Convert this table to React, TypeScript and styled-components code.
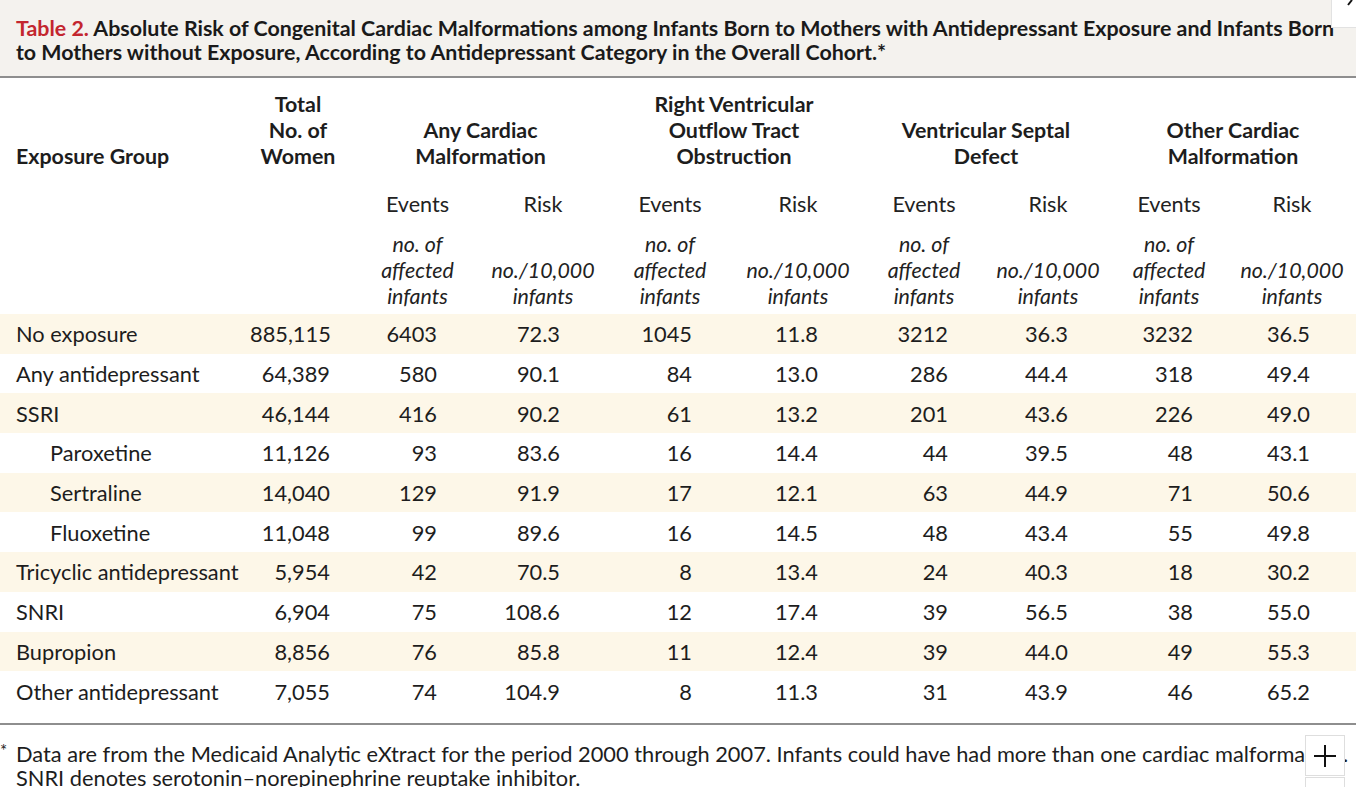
import React from "react";
import styled, { createGlobalStyle } from "styled-components";

const GlobalStyle = createGlobalStyle`
  html, body {
    margin: 0;
    padding: 0;
    background: #ffffff;
  }
  body {
    font-family: Lato, "Open Sans", sans-serif;
    color: #1d1d1d;
    overflow: hidden;
  }
`;

// column template shared by header and body rows
const COLS = "250px 105px 125px 126px 128px 128px 124px 124px 118px 128px";
// right padding of the numeric cells, one per data column
const PADS = [25, 43, 46, 42, 44, 38, 42, 35, 46];

type Row = { name: string; indent?: boolean; values: string[] };

const rows: Row[] = [
  { name: "No exposure", values: ["885,115", "6403", "72.3", "1045", "11.8", "3212", "36.3", "3232", "36.5"] },
  { name: "Any antidepressant", values: ["64,389", "580", "90.1", "84", "13.0", "286", "44.4", "318", "49.4"] },
  { name: "SSRI", values: ["46,144", "416", "90.2", "61", "13.2", "201", "43.6", "226", "49.0"] },
  { name: "Paroxetine", indent: true, values: ["11,126", "93", "83.6", "16", "14.4", "44", "39.5", "48", "43.1"] },
  { name: "Sertraline", indent: true, values: ["14,040", "129", "91.9", "17", "12.1", "63", "44.9", "71", "50.6"] },
  { name: "Fluoxetine", indent: true, values: ["11,048", "99", "89.6", "16", "14.5", "48", "43.4", "55", "49.8"] },
  { name: "Tricyclic antidepressant", values: ["5,954", "42", "70.5", "8", "13.4", "24", "40.3", "18", "30.2"] },
  { name: "SNRI", values: ["6,904", "75", "108.6", "12", "17.4", "39", "56.5", "38", "55.0"] },
  { name: "Bupropion", values: ["8,856", "76", "85.8", "11", "12.4", "39", "44.0", "49", "55.3"] },
  { name: "Other antidepressant", values: ["7,055", "74", "104.9", "8", "11.3", "31", "43.9", "46", "65.2"] },
];

const groups = [
  ["Any Cardiac", "Malformation"],
  ["Right Ventricular", "Outflow Tract", "Obstruction"],
  ["Ventricular Septal", "Defect"],
  ["Other Cardiac", "Malformation"],
];

const App = () => {
  return (
    <Page>
      <GlobalStyle />
      <Caption>
        <TitleLine>
          <Red>Table 2.</Red> Absolute Risk of Congenital Cardiac Malformations among Infants Born to
          Mothers with Antidepressant Exposure and Infants Born
        </TitleLine>
        <TitleLine>
          to Mothers without Exposure, According to Antidepressant Category in the Overall Cohort.*
        </TitleLine>
      </Caption>

      <Table>
        <HeadRow>
          <HeadCell $align="left">Exposure Group</HeadCell>
          <HeadCell $pr={9}>
            Total
            <br />
            No. of
            <br />
            Women
          </HeadCell>
          {groups.map((g, i) => (
            <HeadCell key={i} $span={2}>
              {g.map((l, j) => (
                <div key={j}>{l}</div>
              ))}
            </HeadCell>
          ))}
        </HeadRow>

        <SubRow>
          <span />
          <span />
          {groups.map((_, i) => (
            <React.Fragment key={i}>
              <SubCell>Events</SubCell>
              <SubCell>Risk</SubCell>
            </React.Fragment>
          ))}
        </SubRow>

        <UnitRow>
          <span />
          <span />
          {groups.map((_, i) => (
            <React.Fragment key={i}>
              <UnitCell>
                no. of
                <br />
                affected
                <br />
                infants
              </UnitCell>
              <UnitCell>
                no./10,000
                <br />
                infants
              </UnitCell>
            </React.Fragment>
          ))}
        </UnitRow>

        <Body>
          {rows.map((r, i) => (
            <DataRow key={r.name} $striped={i % 2 === 0}>
              <NameCell $indent={r.indent}>{r.name}</NameCell>
              {r.values.map((v, j) => (
                <NumCell key={j} $pr={PADS[j]}>
                  {v}
                </NumCell>
              ))}
            </DataRow>
          ))}
        </Body>
      </Table>

      <Footnote>
        <Star>*</Star>Data are from the Medicaid Analytic eXtract for the period 2000 through 2007. Infants
        could have had more than one cardiac malformation.
        <br />
        SNRI denotes serotonin–norepinephrine reuptake inhibitor.
      </Footnote>

      <CornerTab>
        <svg width="25" height="27" viewBox="0 0 25 27">
          <path d="M16 5 L20 0" stroke="#111" strokeWidth="2" fill="none" />
        </svg>
      </CornerTab>

      <ZoomButton aria-label="zoom in">
        <svg width="26" height="26" viewBox="0 0 26 26">
          <path d="M13 2 V24 M2 13 H24" stroke="#111" strokeWidth="2" fill="none" />
        </svg>
      </ZoomButton>
      <ZoomButton $second aria-label="zoom out" />
    </Page>
  );
};

export default App;

const Page = styled.div`
  position: relative;
  width: 1356px;
  height: 787px;
  overflow: hidden;
  background: #ffffff;
`;

const Caption = styled.div`
  background: #f4f2ee;
  padding: 16px 16px 12px;
  border-bottom: 2px solid #8e8e8e;
`;

const TitleLine = styled.div`
  font-size: 21.4px;
  font-weight: 700;
  line-height: 24px;
  white-space: nowrap;
  color: #1a1a1a;
`;

const Red = styled.span`
  color: #c3262f;
`;

const Table = styled.div`
  padding-top: 13px;
  padding-bottom: 12px;
  border-bottom: 2px solid #8e8e8e;
`;

const HeadRow = styled.div`
  display: grid;
  grid-template-columns: ${COLS};
  align-items: end;
`;

const HeadCell = styled.div<{ $align?: string; $span?: number; $pr?: number }>`
  grid-column: span ${(p) => p.$span || 1};
  text-align: ${(p) => p.$align || "center"};
  padding-left: ${(p) => (p.$align === "left" ? "16px" : "0")};
  padding-right: ${(p) => p.$pr || 0}px;
  font-size: 21.4px;
  font-weight: 700;
  line-height: 26px;
  white-space: nowrap;
`;

const SubRow = styled.div`
  display: grid;
  grid-template-columns: ${COLS};
  margin-top: 22px;
`;

const SubCell = styled.div`
  text-align: center;
  font-size: 21.6px;
  line-height: 26px;
  color: #222;
`;

const UnitRow = styled.div`
  display: grid;
  grid-template-columns: ${COLS};
  align-items: end;
  margin-top: 14px;
  margin-bottom: 5px;
`;

const UnitCell = styled.div`
  text-align: center;
  font-size: 21.4px;
  font-style: italic;
  line-height: 26px;
  color: #222;
  white-space: nowrap;
`;

const Body = styled.div`
  display: flex;
  flex-direction: column;
`;

const DataRow = styled.div<{ $striped?: boolean }>`
  display: grid;
  grid-template-columns: ${COLS};
  align-items: center;
  height: 39.7px;
  background: ${(p) => (p.$striped ? "#fdf7e8" : "transparent")};
  font-size: 21.8px;
  color: #1d1d1d;
`;

const NameCell = styled.div<{ $indent?: boolean }>`
  padding-left: ${(p) => (p.$indent ? 50 : 16)}px;
  white-space: nowrap;
`;

const NumCell = styled.div<{ $pr: number }>`
  text-align: right;
  padding-right: ${(p) => p.$pr}px;
`;

const Footnote = styled.div`
  padding: 14px 16px 0;
  font-size: 21.8px;
  line-height: 24px;
  color: #1d1d1d;
  text-indent: -16px;
  white-space: nowrap;
`;

const Star = styled.span`
  display: inline-block;
  width: 16px;
  text-indent: 0;
  vertical-align: 5px;
  font-size: 17px;
`;

const CornerTab = styled.div`
  position: absolute;
  top: 0;
  right: 0;
  width: 24px;
  height: 27px;
  background: #ffffff;
  border-left: 1px solid #e2e2e2;
  border-bottom: 1px solid #e2e2e2;
  svg {
    display: block;
  }
`;

const ZoomButton = styled.div<{ $second?: boolean }>`
  position: absolute;
  left: 1305px;
  top: ${(p) => (p.$second ? 777 : 735)}px;
  width: 38px;
  height: 39px;
  background: #ffffff;
  border: 1px solid #dedede;
  display: flex;
  align-items: center;
  justify-content: center;
`;
